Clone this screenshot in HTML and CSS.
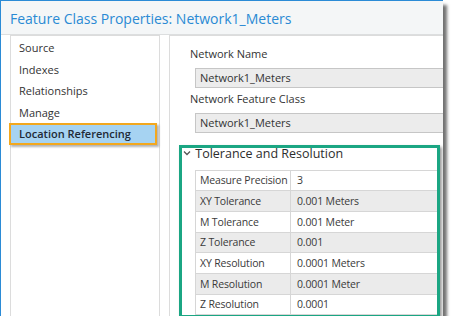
FILE: index.html
```html
<!DOCTYPE html>
<html lang="en">
<head>
    <meta charset="UTF-8">
    <meta name="viewport" content="width=device-width, initial-scale=1.0">
    <title>Feature Class Properties</title>
    <link rel="stylesheet" href="styles.css">
</head>
<body>
    <div class="window">
        <div class="titlebar">Feature Class Properties: Network1_Meters</div>

        <div class="body">
            <ul class="nav">
                <li>Source</li>
                <li>Indexes</li>
                <li>Relationships</li>
                <li>Manage</li>
                <li class="selected">Location Referencing</li>
            </ul>

            <div class="content">
                <div class="fields">
                    <div class="label">Network Name</div>
                    <div class="field">Network1_Meters</div>
                    <div class="label">Network Feature Class</div>
                    <div class="field">Network1_Meters</div>
                </div>

                <div class="tolerance">
                    <div class="group-head">
                        <svg class="chevron" width="8" height="6" viewBox="0 0 8 6">
                            <polyline points="1,1.5 4,4.5 7,1.5" fill="none" stroke="#555" stroke-width="1.3"/>
                        </svg>
                        Tolerance and Resolution
                    </div>
                    <table class="grid">
                        <tr><td>Measure Precision</td><td>3</td></tr>
                        <tr><td>XY Tolerance</td><td>0.001 Meters</td></tr>
                        <tr><td>M Tolerance</td><td>0.001 Meter</td></tr>
                        <tr><td>Z Tolerance</td><td>0.001</td></tr>
                        <tr><td>XY Resolution</td><td>0.0001 Meters</td></tr>
                        <tr><td>M Resolution</td><td>0.0001 Meter</td></tr>
                        <tr><td>Z Resolution</td><td>0.0001</td></tr>
                    </table>
                </div>
            </div>
        </div>
    </div>
</body>
</html>
```

FILE: styles.css
```css
body {
    margin: 0;
    background: #ffffff;
    font-family: "Open Sans", "Noto Sans", sans-serif;
    color: #333;
}
.window {
    width: 442px;
    height: 315px;
    background: #fff;
    border-top: 1px solid #2b8bd6;
    border-left: 1px solid #2b8bd6;
    box-shadow: 4px 5px 3px rgba(0,0,0,0.55);
    overflow: hidden;
    display: flex;
    flex-direction: column;
}
.titlebar {
    height: 33px;
    line-height: 35px;
    padding-left: 9px;
    background: #f4f6f7;
    border-bottom: 1px solid #dcdedf;
    color: #2a8ad4;
    font-size: 14px;
    white-space: nowrap;
}
.body {
    flex: 1;
    display: flex;
    padding-left: 9px;
    gap: 9px;
    min-height: 0;
}
.nav {
    list-style: none;
    margin: 0;
    padding: 1px 0 0;
    width: 148px;
    border: 1px solid #dcdcdc;
    border-bottom: none;
    font-size: 11px;
}
.nav li {
    height: 21.5px;
    line-height: 21.5px;
    padding-left: 8px;
    white-space: nowrap;
}
.nav li.selected {
    box-sizing: border-box;
    margin: 0 2px 0 -2px;
    padding-left: 8px;
    line-height: 17.5px;
    border: 2px solid #f3a81e;
    background: #a6d3f2;
    font-weight: 600;
    color: #1f2a36;
    box-shadow: 2px 2px 2px rgba(0,0,0,0.3);
}
.content {
    flex: 1;
    border-left: 1px solid #dcdcdc;
    border-top: 1px solid #dcdcdc;
    padding: 8px 0 0 9px;
    min-width: 0;
}
.fields {
    padding-left: 11px;
}
.label {
    height: 20px;
    line-height: 20px;
    font-size: 11px;
    white-space: nowrap;
}
.field {
    margin: 3.5px 0 1.5px 5px;
    width: 300px;
    height: 18px;
    line-height: 18px;
    padding-left: 4px;
    background: #ececec;
    border: 1px solid #c6c6c6;
    font-size: 11px;
    white-space: nowrap;
}
.tolerance {
    margin-top: 12px;
    width: 255px;
    border: 3px solid #1ba683;
    box-shadow: 2px 2px 3px rgba(0,0,0,0.4);
}
.group-head {
    height: 22px;
    line-height: 12px;
    padding-left: 1px;
    font-size: 12.5px;
    font-weight: 500;
    color: #2d2d2d;
    white-space: nowrap;
}
.chevron {
    vertical-align: 2px;
    margin-right: 1px;
}
.grid {
    margin-left: 13px;
    width: calc(100% - 13px);
    border-collapse: collapse;
    font-size: 10.5px;
    letter-spacing: -0.15px;
    color: #3a3a3a;
}
.grid td {
    height: 19.7px;
    padding: 0 0 0 4px;
    border: 1px solid #d6d6d6;
    border-right: none;
    white-space: nowrap;
}
.grid td:first-child {
    width: 90px;
}
.grid td + td {
    padding-left: 6px;
}
.grid tr:nth-child(even) td {
    background: #ebebeb;
}
```
